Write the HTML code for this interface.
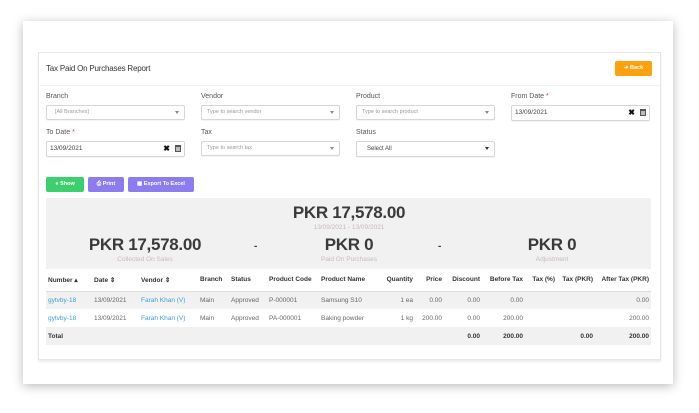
<!DOCTYPE html>
<html><head><meta charset="utf-8"><style>
*{box-sizing:border-box;margin:0;padding:0}
body{width:699px;height:413px;background:#fff;font-family:"Liberation Sans",sans-serif;position:relative;overflow:hidden;color:#444}
.card{position:absolute;left:23px;top:21px;width:650px;height:363px;background:#fff;box-shadow:0 2px 10px rgba(0,0,0,.28)}
.panel{position:absolute;left:38px;top:52px;width:623px;height:308px;border:1px solid #e6e6e6;border-top:1px solid #e8e8e8;box-shadow:0 2px 2px rgba(0,0,0,.08)}
.title{position:absolute;left:46px;top:64px;font-size:8px;color:#333;letter-spacing:-.2px}
.hdrline{position:absolute;left:39px;top:85px;width:621px;height:1px;background:#f2f2f2}
.back{position:absolute;left:615px;top:61px;width:37px;height:15px;background:#ffa00f;border-radius:2px;color:#fff;font-size:5.5px;font-weight:bold;text-align:center;line-height:15px}
.lbl{position:absolute;font-size:7px;color:#555}
.lbl b{color:#e33;font-weight:normal}
.inp{position:absolute;height:15px;width:139px;border:1px solid #d6d6d6;border-radius:2px;font-size:5.5px;color:#999;line-height:13px;padding-left:8px;background:#fff;box-shadow:0 1px 1px rgba(0,0,0,.05)}
.inp.d{color:#444;padding-left:3px;font-size:6.5px;line-height:14px}
.caret{position:absolute;right:5px;top:5px;width:0;height:0;border-left:2.5px solid transparent;border-right:2.5px solid transparent;border-top:3px solid #888}
.x{position:absolute;right:14px;top:0;font-size:8px;color:#111;font-weight:bold}
.cal{position:absolute;right:3px;top:3px;width:6px;height:7px;border:1px solid #555;border-top-width:2px;background:#bbb}
.btn{position:absolute;top:177px;height:15px;border-radius:2px;color:#fff;font-size:5.5px;font-weight:bold;text-align:center;line-height:15px}
.sum{position:absolute;left:46px;top:198px;width:605px;height:71px;background:#f1f1f1}
.big{position:absolute;font-size:17px;font-weight:bold;color:#3a3a3a;text-align:center;letter-spacing:-.3px}
.sm{position:absolute;font-size:6.5px;color:#c9b9bd;text-align:center}
table{position:absolute;left:46px;top:269px;width:605px;border-collapse:collapse;font-size:6.5px;table-layout:fixed}
td,th{height:18px;padding:0 2px;white-space:nowrap;overflow:hidden}
th{height:22px;font-weight:bold;color:#333;text-align:left;border-bottom:1px solid #ddd}
tr.g td{background:#f1f1f1}
td{color:#666}
td.a{color:#3aa0d8}
.r{text-align:right}
</style></head><body>
<div class="card"></div>
<div class="panel"></div>
<div class="title">Tax Paid On Purchases Report</div>
<div class="back">&#10140; Back</div>
<div class="hdrline"></div>

<div class="lbl" style="left:46px;top:93px">Branch</div>
<div class="lbl" style="left:201px;top:93px">Vendor</div>
<div class="lbl" style="left:356px;top:93px">Product</div>
<div class="lbl" style="left:511px;top:93px">From Date <b>*</b></div>
<div class="inp" style="left:46px;top:105px">[All Branches]<span class="caret"></span></div>
<div class="inp" style="left:201px;top:105px;padding-left:5px">Type to search vendor<span class="caret"></span></div>
<div class="inp" style="left:356px;top:105px;padding-left:5px">Type to search product<span class="caret"></span></div>
<div class="inp d" style="left:511px;top:105px;height:16px">13/09/2021<span class="x">✖</span><span class="cal"></span></div>

<div class="lbl" style="left:46px;top:129px">To Date <b>*</b></div>
<div class="lbl" style="left:201px;top:129px">Tax</div>
<div class="lbl" style="left:356px;top:129px">Status</div>
<div class="inp d" style="left:46px;top:141px;height:16px">13/09/2021<span class="x">✖</span><span class="cal"></span></div>
<div class="inp" style="left:201px;top:141px;padding-left:5px">Type to search tax<span class="caret"></span></div>
<div class="inp" style="left:356px;top:141px;color:#444;font-size:6px;padding-left:10px;height:16px;line-height:14px">Select All<span class="caret" style="border-top-color:#333"></span></div>

<div class="btn" style="left:46px;width:38px;background:#3ccf6e">&#9679; Show</div>
<div class="btn" style="left:88px;width:36px;background:#8c7cf0">&#9113; Print</div>
<div class="btn" style="left:128px;width:66px;background:#8c7cf0">&#9638; Export To Excel</div>

<div class="sum"></div>
<div class="big" style="left:249px;top:203px;width:200px">PKR 17,578.00</div>
<div class="sm" style="left:249px;top:224px;width:200px">13/09/2021 - 13/09/2021</div>
<div class="big" style="left:45px;top:235px;width:200px">PKR 17,578.00</div>
<div class="sm" style="left:45px;top:256px;width:200px">Collected On Sales</div>
<div class="big" style="left:249px;top:235px;width:200px">PKR 0</div>
<div class="sm" style="left:249px;top:256px;width:200px">Paid On Purchases</div>
<div class="big" style="left:452px;top:235px;width:200px">PKR 0</div>
<div class="sm" style="left:452px;top:256px;width:200px">Adjustment</div>
<div class="big" style="left:254px;top:241px;font-size:10px">-</div>
<div class="big" style="left:438px;top:241px;font-size:10px">-</div>

<table>
<colgroup><col style="width:46px"><col style="width:47px"><col style="width:59px"><col style="width:31px"><col style="width:38px"><col style="width:52px"><col style="width:58px"><col style="width:38px"><col style="width:29px"><col style="width:38px"><col style="width:43px"><col style="width:32px"><col style="width:38px"><col style="width:56px"></colgroup>
<tr><th>Number &#9652;</th><th>Date &#8661;</th><th>Vendor &#8661;</th><th>Branch</th><th>Status</th><th>Product Code</th><th>Product Name</th><th class="r">Quantity</th><th class="r">Price</th><th class="r">Discount</th><th class="r">Before Tax</th><th class="r">Tax (%)</th><th class="r">Tax (PKR)</th><th class="r">After Tax (PKR)</th></tr>
<tr class="g"><td class="a">gytvby-18</td><td>13/09/2021</td><td class="a">Farah Khan (V)</td><td>Main</td><td>Approved</td><td>P-000001</td><td>Samsung S10</td><td class="r">1 ea</td><td class="r">0.00</td><td class="r">0.00</td><td class="r">0.00</td><td></td><td></td><td class="r">0.00</td></tr>
<tr><td class="a">gytvby-18</td><td>13/09/2021</td><td class="a">Farah Khan (V)</td><td>Main</td><td>Approved</td><td>PA-000001</td><td>Baking powder</td><td class="r">1 kg</td><td class="r">200.00</td><td class="r">0.00</td><td class="r">200.00</td><td></td><td></td><td class="r">200.00</td></tr>
<tr class="g"><td style="font-weight:bold;color:#333">Total</td><td></td><td></td><td></td><td></td><td></td><td></td><td></td><td></td><td class="r" style="font-weight:bold;color:#333">0.00</td><td class="r" style="font-weight:bold;color:#333">200.00</td><td></td><td class="r" style="font-weight:bold;color:#333">0.00</td><td class="r" style="font-weight:bold;color:#333">200.00</td></tr>
</table>
</body></html>
